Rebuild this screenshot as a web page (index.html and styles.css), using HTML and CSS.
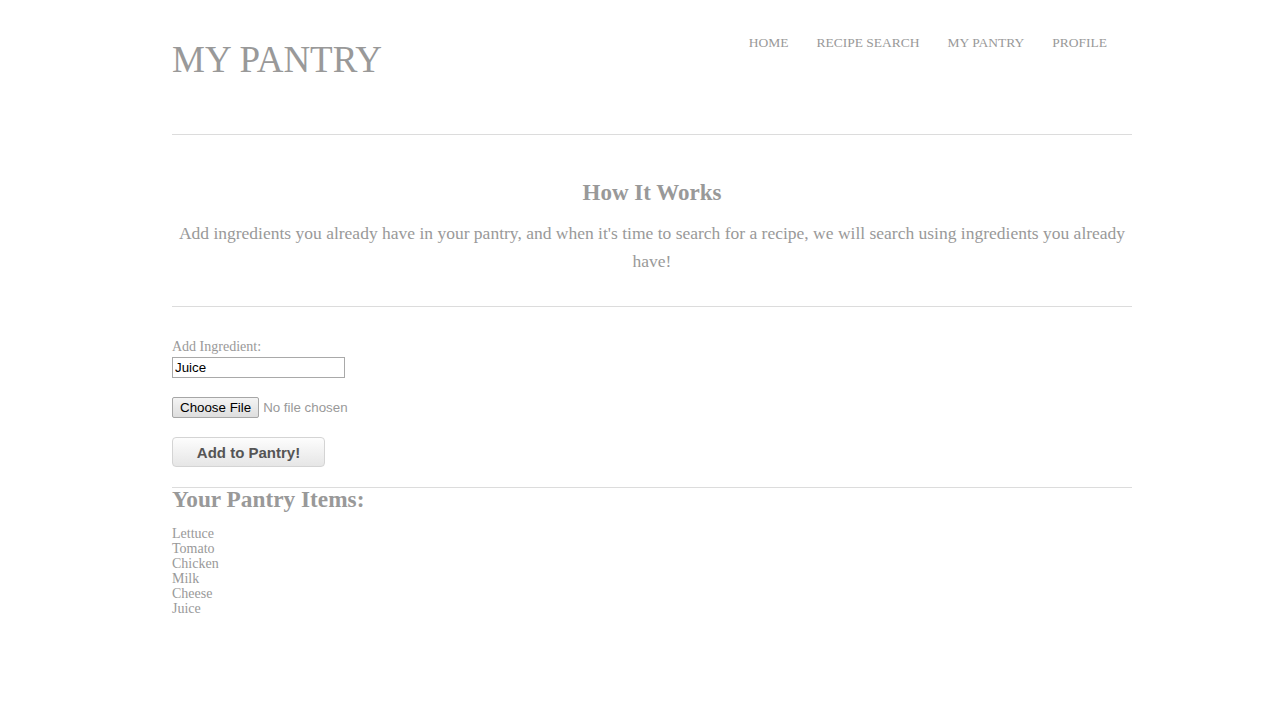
FILE: index.html
```html
<!DOCTYPE html>
<html>
<head>
<meta charset="utf-8">
<title>My Pantry</title>
<link rel="stylesheet" href="styles.css">
</head>
<body>
<div class="page">
  <header class="header">
    <h1 class="logo">MY PANTRY</h1>
    <nav class="nav">
      <a href="#">HOME</a>
      <a href="#">RECIPE SEARCH</a>
      <a href="#">MY PANTRY</a>
      <a href="#">PROFILE</a>
    </nav>
  </header>
  <section class="intro">
    <h2 class="intro-title">How It Works</h2>
    <p class="intro-text">Add ingredients you already have in your pantry, and when it's time to search for a recipe, we will search using ingredients you already have!</p>
  </section>
  <form class="add-form">
    <label class="label" for="ing">Add Ingredient:</label>
    <input class="text-input" id="ing" type="text" value="Juice">
    <div class="file-row">
      <span class="file-btn">Choose File</span>
      <span class="file-name">No file chosen</span>
    </div>
    <button class="add-btn" type="button">Add to Pantry!</button>
  </form>
  <section class="items">
    <h3 class="items-title">Your Pantry Items:</h3>
    <ul class="item-list">
      <li>Lettuce</li>
      <li>Tomato</li>
      <li>Chicken</li>
      <li>Milk</li>
      <li>Cheese</li>
      <li>Juice</li>
    </ul>
  </section>
</div>
</body>
</html>
```

FILE: styles.css
```css
* { box-sizing: border-box; }
html, body { margin: 0; padding: 0; background: #fff; }
body {
  font-family: "Liberation Serif", "Times New Roman", serif;
  color: #999;
}
.page {
  width: 960px;
  margin-left: 172px;
}
.header {
  display: flex;
  justify-content: space-between;
  align-items: flex-start;
  height: 135px;
  border-bottom: 1px solid #dcdcdc;
}
.logo {
  margin: 40px 0 0 0;
  font-size: 37px;
  line-height: 40px;
  font-weight: normal;
  color: #999;
}
.nav {
  display: flex;
  gap: 28px;
  margin: 33px 25px 0 0;
}
.nav a {
  font-size: 13.5px;
  line-height: 20px;
  color: #999;
  text-decoration: none;
}
.intro {
  border-bottom: 1px solid #dcdcdc;
  padding: 44px 0 31px;
  text-align: center;
}
.intro-title {
  margin: 0;
  font-size: 23px;
  line-height: 28px;
  font-weight: bold;
  color: #999;
}
.intro-text {
  margin: 12px 0 0;
  font-size: 17.5px;
  line-height: 28px;
}
.add-form {
  display: flex;
  flex-direction: column;
  align-items: flex-start;
  padding: 32px 0 20px;
  border-bottom: 1px solid #dcdcdc;
}
.label {
  font-size: 14px;
  line-height: 16px;
}
.text-input {
  margin-top: 2px;
  width: 173px;
  height: 21px;
  border: 1px solid #a9a9a9;
  padding: 1px 2px;
  font-family: "Liberation Sans", Arial, sans-serif;
  font-size: 13.33px;
  color: #000;
  outline: none;
}
.file-row {
  margin-top: 19px;
  display: flex;
  align-items: center;
  gap: 4px;
  height: 21px;
  font-family: "Liberation Sans", Arial, sans-serif;
  font-size: 13.33px;
}
.file-btn {
  display: inline-flex;
  align-items: center;
  height: 21px;
  padding: 0 7px;
  border: 1px solid #a6a6a6;
  border-radius: 2px;
  background: linear-gradient(#f4f4f4, #dedede);
  color: #000;
}
.file-name { color: #999; }
.add-btn {
  margin-top: 19px;
  width: 153px;
  height: 30px;
  border: 1px solid #d4d4d4;
  border-radius: 4px;
  background: linear-gradient(#fdfdfd, #e6e6e6);
  font-family: "Liberation Sans", Arial, sans-serif;
  font-size: 15px;
  font-weight: bold;
  color: #555;
  padding: 0;
}
.items-title {
  margin: 2px 0 0;
  font-size: 23.3px;
  line-height: 18px;
  font-weight: bold;
  color: #999;
}
.item-list {
  list-style: none;
  margin: 18px 0 0;
  padding: 0;
  font-size: 14px;
  line-height: 15px;
}
```
